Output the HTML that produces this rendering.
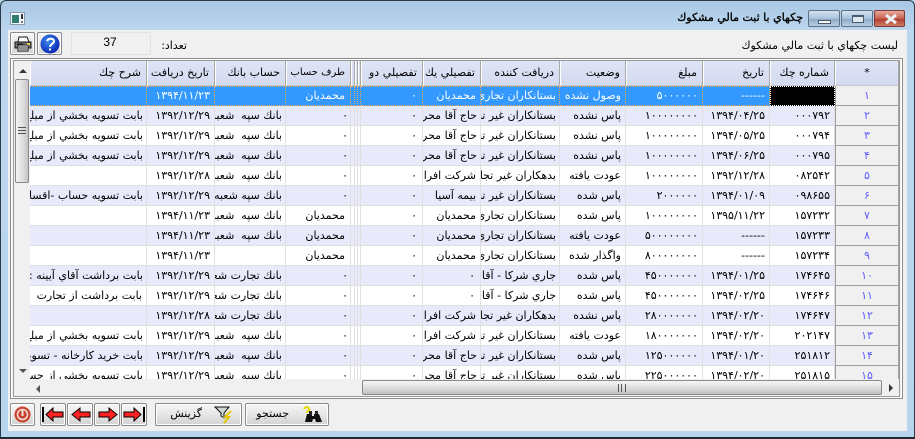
<!DOCTYPE html>
<html lang="fa"><head><meta charset="utf-8"><title>چكهاي با ثبت مالي مشكوك</title>
<style>
html,body{margin:0;padding:0}
body{width:915px;height:439px;overflow:hidden;position:relative;background:#b9d5ee;font:11px "DejaVu Sans","Liberation Sans","Noto Sans CJK SC",sans-serif;color:#000}
.a{position:absolute;box-sizing:border-box}
.win{left:0;top:0;width:915px;height:439px;border:1px solid #2a3a48;border-bottom:2px solid #1e2a34;border-radius:6px 6px 0 0;background:linear-gradient(#a9c8e4,#bcd6ee 30px,#b9d5ee)}
.client{left:8px;top:30px;width:899px;height:401px;background:#f0f0f0}
.cap{border:1px solid #5e7186;border-radius:2px;height:17px;top:10px;width:32px;background:linear-gradient(#d3e2f1,#a9c3dc 50%,#8eabc8 55%,#b5cde3)}
.btn{border:1px solid #8a8a8a;border-radius:2px;background:linear-gradient(#f6f6f6,#e6e6e6 50%,#d2d2d2);box-shadow:inset 0 0 0 1px #fff}
.t{white-space:nowrap;direction:rtl;line-height:14px}
table{border-collapse:separate;border-spacing:0;table-layout:fixed;width:869px}
td,th{box-sizing:border-box;height:20px;padding:0 4px 0 0;overflow:hidden;white-space:nowrap;direction:rtl;text-align:right;font-weight:400;font-size:11px;border-right:1px solid #e0e0e0;border-bottom:1px solid #e0e0e0;line-height:18px}
th{height:25px;background:linear-gradient(#dfe4f5,#d4daf0);border-right:1px solid #a8a8a8;border-left:1px solid #fff;border-bottom:1px solid #c8c8c8;padding-right:5px}
th.c,td.i{text-align:center;padding:0}
td.i{background:#f0f0f0;color:#5f5fff;border-right:1px solid #a0a0a0;border-bottom:1px solid #a0a0a0;border-left:1px solid #a0a0a0}
tr.e td{background:#e8e9fb}
tr.e td.i{background:#f0f0f0}
tr.s td{background:#3399ff;color:#fff;border-right:1px dotted #e6a86a;border-bottom:1px dotted #e6a86a;border-top:1px dotted #e6a86a}
tr.s td.i{background:#f0f0f0;color:#5f5fff;border:0;border-right:1px solid #a0a0a0;border-bottom:1px solid #a0a0a0;border-left:1px solid #a0a0a0}
tr.s td.k{background:#000;border:1px dotted #fff}
td.z{padding-right:2px}
td.y{padding-right:5px}
</style></head><body>
<div class="a win"></div>
<div class="a client"></div>

<svg class="a" style="left:10px;top:12px" width="15" height="13" viewBox="0 0 15 13"><rect x=".5" y=".5" width="14" height="12" fill="#f4f8fb" stroke="#8a9aa8"/><rect x="2" y="3" width="7" height="8" fill="#2f7d6e"/><rect x="11" y="2" width="2" height="5" fill="#333"/><rect x="11" y="9" width="2" height="2" fill="#777"/></svg>
<div class="a t" style="right:112px;top:11px;font-size:11px;-webkit-text-stroke:.35px #000">چكهاي با ثبت مالي مشكوك</div>

<div class="a cap" style="left:808px"><div class="a" style="left:9px;top:9px;width:13px;height:4px;background:#f4f6f8;border:1px solid #4a5a6a"></div></div>
<div class="a cap" style="left:841px"><div class="a" style="left:10px;top:4px;width:12px;height:8px;border:1px solid #4a5a6a;border-top-width:2px;background:#dfe8f0"></div></div>
<div class="a cap" style="left:874px;width:31px;border-color:#7e3a34;background:linear-gradient(#e8a89c,#c9604f 50%,#ad3f30 55%,#d07a68)"><svg class="a" style="left:9px;top:3px" width="14" height="10" viewBox="0 0 14 10"><path d="M2 1L12 9M12 1L2 9" stroke="#eef2f4" stroke-width="3" fill="none"/></svg></div>

<!-- toolbar -->
<div class="a btn" style="left:10px;top:32px;width:25px;height:23px"><svg class="a" style="left:3px;top:3px" width="18" height="16" viewBox="0 0 18 16"><path d="M5 1h8l2 5H4z" fill="#fff" stroke="#111"/><path d="M1 6h16v6H1z" fill="#777" stroke="#111"/><path d="M4 9h10v6H4z" fill="#fff" stroke="#111"/><path d="M5 11h8M5 13h8M3 8h6" stroke="#222"/><rect x="13" y="7" width="3" height="2" fill="#e5d24a"/></svg></div>
<div class="a btn" style="left:37px;top:32px;width:25px;height:23px"><svg class="a" style="left:2px;top:1px" width="20" height="20" viewBox="0 0 20 20"><defs><radialGradient id="g" cx=".4" cy=".35" r=".7"><stop offset="0" stop-color="#3f8cf0"/><stop offset="1" stop-color="#0620b0"/></radialGradient></defs><circle cx="10" cy="10" r="9.5" fill="url(#g)"/><path d="M7 7c1-3 7-3 7 0 0 3-4 3-4 6" stroke="#fff" stroke-width="2" fill="none"/><rect x="9" y="14.500" width="2" height="2" fill="#fff"/></svg></div>
<div class="a" style="left:71px;top:32px;width:80px;height:23px;border:1px solid #e2e2e2;border-radius:2px;background:#f0f0f0;text-align:center;font:12px/19px 'Liberation Sans',sans-serif;padding-right:2px">37</div>
<div class="a t" style="right:728px;top:39px">تعداد:</div>
<div class="a t" style="right:17px;top:39px">ليست چكهاي با ثبت مالي مشكوك</div>

<!-- grid -->
<div class="a" style="left:10px;top:58px;width:893px;height:341px;border:1px solid #8c8c8c;background:#f0f0f0;box-shadow:inset 0 0 0 1px #fff"></div>
<div class="a" style="left:13px;top:60px;width:887px;height:337px;border:1px solid #9a9a9a;background:#f0f0f0"></div>

<div class="a" style="left:30px;top:61px;width:869px;height:318px;overflow:hidden;background:#fff">
<table dir="ltr">
<colgroup><col style="width:117px"><col style="width:68px"><col style="width:71px"><col style="width:65px"><col style="width:4px"><col style="width:3px"><col style="width:3px"><col style="width:62px"><col style="width:58px"><col style="width:79px"><col style="width:66px"><col style="width:77px"><col style="width:67px"><col style="width:65px"><col style="width:64px"></colgroup>
<tr><th>شرح چك</th><th>تاريخ دريافت</th><th>حساب بانك</th><th style="font-size:10px">طرف حساب</th><th></th><th></th><th></th><th>تفصيلي دو</th><th>تفصيلي يك</th><th>دريافت كننده</th><th>وضعيت</th><th>مبلغ</th><th>تاريخ</th><th>شماره چك</th><th class="c">*</th></tr>
<tr class="s"><td></td><td>۱۳۹۴/۱۱/۲۳</td><td></td><td class="y">محمديان</td><td></td><td></td><td></td><td class="y">۰</td><td>محمديان</td><td>بستانكاران تجاري</td><td>وصول نشده</td><td>۵۰۰۰۰۰۰</td><td>------</td><td class="k"></td><td class="i">۱</td></tr>
<tr class="e"><td>بابت تسويه بخشي از مبلغ</td><td>۱۳۹۲/۱۲/۲۹</td><td>بانك سپه&nbsp;&nbsp;شعبه</td><td class="z">۰</td><td></td><td></td><td></td><td class="y">۰</td><td>حاج آقا محرمي</td><td>بستانكاران غير تجاري</td><td>پاس نشده</td><td>۱۰۰۰۰۰۰۰۰</td><td>۱۳۹۴/۰۴/۲۵</td><td>۰۰۰۷۹۲</td><td class="i">۲</td></tr>
<tr><td>بابت تسويه بخشي از مبلغ</td><td>۱۳۹۲/۱۲/۲۹</td><td>بانك سپه&nbsp;&nbsp;شعبه</td><td class="z">۰</td><td></td><td></td><td></td><td class="y">۰</td><td>حاج آقا محرمي</td><td>بستانكاران غير تجاري</td><td>پاس نشده</td><td>۱۰۰۰۰۰۰۰۰</td><td>۱۳۹۴/۰۵/۲۵</td><td>۰۰۰۷۹۴</td><td class="i">۳</td></tr>
<tr class="e"><td>بابت تسويه بخشي از مبلغ</td><td>۱۳۹۲/۱۲/۲۹</td><td>بانك سپه&nbsp;&nbsp;شعبه</td><td class="z">۰</td><td></td><td></td><td></td><td class="y">۰</td><td>حاج آقا محرمي</td><td>بستانكاران غير تجاري</td><td>پاس نشده</td><td>۱۰۰۰۰۰۰۰۰</td><td>۱۳۹۴/۰۶/۲۵</td><td>۰۰۰۷۹۵</td><td class="i">۴</td></tr>
<tr><td></td><td>۱۳۹۲/۱۲/۲۸</td><td>بانك سپه&nbsp;&nbsp;شعبه</td><td class="z">۰</td><td></td><td></td><td></td><td class="y">۰</td><td>شركت افرا</td><td>بدهكاران غير تجاري</td><td>عودت يافته</td><td>۱۰۰۰۰۰۰۰۰</td><td>۱۳۹۲/۱۲/۲۸</td><td>۰۸۲۵۴۲</td><td class="i">۵</td></tr>
<tr class="e"><td>بابت تسويه حساب -اقساط</td><td>۱۳۹۲/۱۲/۲۹</td><td>بانك سپه شعبه شعبه</td><td class="z">۰</td><td></td><td></td><td></td><td class="y">۰</td><td>بيمه آسيا</td><td>بستانكاران غير تجاري</td><td>پاس شده</td><td>۲۰۰۰۰۰۰</td><td>۱۳۹۴/۰۱/۰۹</td><td>۰۹۸۶۵۵</td><td class="i">۶</td></tr>
<tr><td></td><td>۱۳۹۴/۱۱/۲۳</td><td>بانك سپه&nbsp;&nbsp;شعبه</td><td class="y">محمديان</td><td></td><td></td><td></td><td class="y">۰</td><td>محمديان</td><td>بستانكاران تجاري</td><td>پاس شده</td><td>۱۰۰۰۰۰۰۰۰</td><td>۱۳۹۵/۱۱/۲۲</td><td>۱۵۷۲۳۲</td><td class="i">۷</td></tr>
<tr class="e"><td></td><td>۱۳۹۴/۱۱/۲۳</td><td>بانك سپه&nbsp;&nbsp;شعبه</td><td class="y">محمديان</td><td></td><td></td><td></td><td class="y">۰</td><td>محمديان</td><td>بستانكاران تجاري</td><td>عودت يافته</td><td>۵۰۰۰۰۰۰۰۰</td><td>------</td><td>۱۵۷۲۳۳</td><td class="i">۸</td></tr>
<tr><td></td><td>۱۳۹۴/۱۱/۲۳</td><td></td><td class="y">محمديان</td><td></td><td></td><td></td><td class="y">۰</td><td>محمديان</td><td>بستانكاران تجاري</td><td>واگذار شده</td><td>۸۰۰۰۰۰۰۰۰</td><td>------</td><td>۱۵۷۲۳۴</td><td class="i">۹</td></tr>
<tr class="e"><td>بابت برداشت آقاي آيينه : مبلغ</td><td>۱۳۹۲/۱۲/۲۹</td><td>بانك تجارت شعبه</td><td class="z">۰</td><td></td><td></td><td></td><td class="y">۰</td><td class="y">۰</td><td>جاري شركا - آقاي</td><td>پاس شده</td><td>۴۵۰۰۰۰۰۰۰</td><td>۱۳۹۴/۰۱/۲۵</td><td>۱۷۴۶۴۵</td><td class="i">۱۰</td></tr>
<tr><td>بابت برداشت از تجارت</td><td>۱۳۹۲/۱۲/۲۹</td><td>بانك تجارت شعبه</td><td class="z">۰</td><td></td><td></td><td></td><td class="y">۰</td><td class="y">۰</td><td>جاري شركا - آقاي</td><td>پاس شده</td><td>۴۵۰۰۰۰۰۰۰</td><td>۱۳۹۴/۰۲/۲۵</td><td>۱۷۴۶۴۶</td><td class="i">۱۱</td></tr>
<tr class="e"><td></td><td>۱۳۹۲/۱۲/۲۸</td><td>بانك تجارت شعبه</td><td class="z">۰</td><td></td><td></td><td></td><td class="y">۰</td><td>شركت افرا</td><td>بدهكاران غير تجاري</td><td>پاس نشده</td><td>۲۸۰۰۰۰۰۰۰</td><td>۱۳۹۴/۰۲/۲۰</td><td>۱۷۴۶۴۷</td><td class="i">۱۲</td></tr>
<tr><td>بابت تسويه بخشي از مبلغ</td><td>۱۳۹۲/۱۲/۲۹</td><td>بانك سپه&nbsp;&nbsp;شعبه</td><td class="z">۰</td><td></td><td></td><td></td><td class="y">۰</td><td>شركت افرا</td><td>بستانكاران غير تجاري</td><td>عودت يافته</td><td>۱۸۰۰۰۰۰۰۰</td><td>۱۳۹۴/۰۲/۲۰</td><td>۲۰۲۱۴۷</td><td class="i">۱۳</td></tr>
<tr class="e"><td>بابت خريد كارخانه - تسويه</td><td>۱۳۹۲/۱۲/۲۹</td><td>بانك سپه&nbsp;&nbsp;شعبه</td><td class="z">۰</td><td></td><td></td><td></td><td class="y">۰</td><td>حاج آقا محرمي</td><td>بستانكاران غير تجاري</td><td>پاس شده</td><td>۱۲۵۰۰۰۰۰۰</td><td>۱۳۹۴/۰۱/۲۰</td><td>۲۵۱۸۱۲</td><td class="i">۱۴</td></tr>
<tr><td>بابت تسويه بخشي از حساب</td><td>۱۳۹۲/۱۲/۲۹</td><td>بانك سپه&nbsp;&nbsp;شعبه</td><td class="z">۰</td><td></td><td></td><td></td><td class="y">۰</td><td>حاج آقا محرمي</td><td>بستانكاران غير تجاري</td><td>پاس شده</td><td>۲۲۵۰۰۰۰۰۰</td><td>۱۳۹۴/۰۲/۲۰</td><td>۲۵۱۸۱۵</td><td class="i">۱۵</td></tr>
</table>
</div>

<!-- vertical scrollbar -->
<div class="a" style="left:14px;top:61px;width:16px;height:319px;background:#f0f0f0"></div>
<div class="a" style="left:19px;top:69px;width:0;height:0;border:4px solid transparent;border-top:0;border-bottom:4px solid #333"></div>
<div class="a" style="left:19px;top:369px;width:0;height:0;border:4px solid transparent;border-bottom:0;border-top:4px solid #555"></div>
<div class="a" style="left:15px;top:79px;width:14px;height:104px;border:1px solid #8a8a8a;border-radius:2px;background:linear-gradient(90deg,#f4f4f4,#dcdcdc 60%,#c4c4c4)"></div>
<div class="a" style="left:18px;top:127px;width:8px;height:7px;border-top:1px solid #555;border-bottom:1px solid #555"><div style="margin-top:2px;height:1px;background:#555"></div></div>

<!-- horizontal scrollbar -->
<div class="a" style="left:30px;top:380px;width:869px;height:16px;background:#f0f0f0"></div>
<div class="a" style="left:36px;top:385px;width:0;height:0;border:4px solid transparent;border-left:0;border-right:4px solid #555"></div>
<div class="a" style="left:889px;top:384px;width:0;height:0;border:4px solid transparent;border-right:0;border-left:4px solid #333"></div>
<div class="a" style="left:362px;top:380px;width:520px;height:15px;border:1px solid #8a8a8a;border-radius:2px;background:linear-gradient(#f6f6f6,#dcdcdc 55%,#c0c0c0)"></div>
<div class="a" style="left:618px;top:384px;width:8px;height:8px;border-left:1px solid #555;border-right:1px solid #555"><div style="margin-left:2px;width:2px;height:8px;border-left:1px solid #555"></div></div>

<!-- bottom buttons -->
<div class="a btn" style="left:10px;top:403px;width:25px;height:23px"><svg class="a" style="left:3px;top:2px" width="17" height="17" viewBox="0 0 17 17"><circle cx="8.500" cy="8.500" r="8" fill="#c8432e"/><circle cx="8.500" cy="8.500" r="5" fill="none" stroke="#f3e0d8" stroke-width="1.500"/><path d="M8.500 4v6" stroke="#f3e0d8" stroke-width="2"/></svg></div>
<div class="a btn" style="left:40px;top:403px;width:26px;height:23px"><svg class="a" style="left:0;top:2px" width="24" height="17" viewBox="0 0 24 17"><path d="M2 1v15" stroke="#000" stroke-width="2"/><path d="M5 8.500L12 2v4h10v5H12v4z" fill="#f22" stroke="#000"/></svg></div>
<div class="a btn" style="left:67px;top:403px;width:26px;height:23px"><svg class="a" style="left:2px;top:2px" width="22" height="17" viewBox="0 0 22 17"><path d="M2 8.500L10 2v4h10v5H10v4z" fill="#f22" stroke="#000"/></svg></div>
<div class="a btn" style="left:94px;top:403px;width:26px;height:23px"><svg class="a" style="left:2px;top:2px" width="22" height="17" viewBox="0 0 22 17"><path d="M20 8.500L12 2v4H2v5h10v4z" fill="#f22" stroke="#000"/></svg></div>
<div class="a btn" style="left:121px;top:403px;width:26px;height:23px"><svg class="a" style="left:0;top:2px" width="24" height="17" viewBox="0 0 24 17"><path d="M22 1v15" stroke="#000" stroke-width="2"/><path d="M19 8.500L12 2v4H2v5h10v4z" fill="#f22" stroke="#000"/></svg></div>
<div class="a btn" style="left:155px;top:403px;width:87px;height:23px"><div class="a t" style="right:39px;top:3px">گزينش</div><svg class="a" style="right:7px;top:2px" width="20" height="18" viewBox="0 0 20 18"><path d="M1 1h14l-5 6v5l-3-2V7z" fill="#cfd6d6" stroke="#111"/><path d="M17 5l-6 6h4l-5 6" fill="none" stroke="#e5c400" stroke-width="2"/></svg></div>
<div class="a btn" style="left:245px;top:403px;width:84px;height:23px"><div class="a t" style="right:39px;top:3px">جستجو</div><svg class="a" style="right:4px;top:2px" width="22" height="18" viewBox="0 0 22 18"><path d="M5 8h5v2h2V8h5l3 8h-6l-1-3h-2l-1 3H3z" fill="#111"/><rect x="7" y="5" width="3" height="4" fill="#222"/><rect x="13" y="5" width="3" height="4" fill="#222"/><path d="M2 3c1-3 6-2 5 1-1 1-2 1-2 3" stroke="#e5d800" stroke-width="2" fill="none"/></svg></div>
</body></html>
